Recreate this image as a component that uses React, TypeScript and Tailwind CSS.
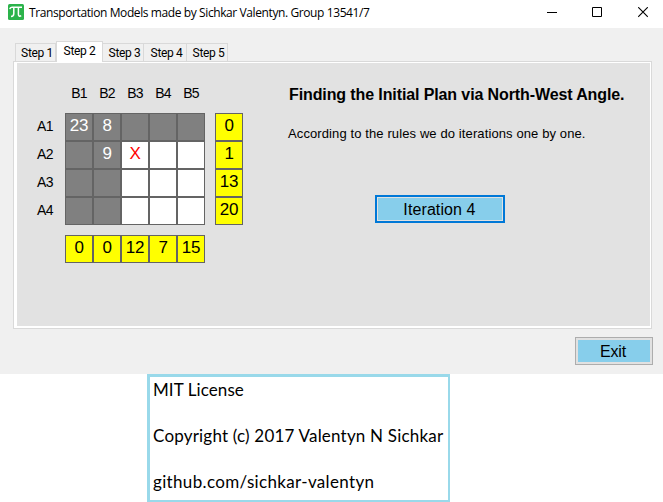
const COLUMNS = ['B1', 'B2', 'B3', 'B4', 'B5'];
const ROWS = [
  { name: 'A1', cells: ['23', '8', '', '', ''], closed: 5 },
  { name: 'A2', cells: ['', '9', 'X', '', ''], closed: 2 },
  { name: 'A3', cells: ['', '', '', '', ''], closed: 2 },
  { name: 'A4', cells: ['', '', '', '', ''], closed: 2 },
];
const SUPPLY = ['0', '1', '13', '20'];
const DEMAND = ['0', '0', '12', '7', '15'];

function Cell({ value, tone }: { value: string; tone: string }) {
  return (
    <div className={`h-7 w-7 border border-[#646464] pt-px text-center text-[17px] leading-[22px] tracking-[-0.3px] ${tone}`}>
      {value}
    </div>
  );
}

function TitleBar() {
  return (
    <header className="flex h-7 items-start bg-white">
      <svg className="mt-1 ml-2 h-4 w-4 shrink-0" viewBox="0 0 16 16">
        <rect width="16" height="16" rx="1.5" fill="#2bb34b" />
        <path
          d="M1.8 5.2C2 3.7 2.8 3.3 4 3.3H14M5.8 3.5V9.5C5.8 11.5 5 12.5 3 12.5M10.4 3.5V10.2C10.4 12 11.6 12.7 13.2 11.7"
          fill="none"
          stroke="white"
          strokeWidth="1.5"
        />
      </svg>
      <h1 className="ml-[5px] font-['Open_Sans',sans-serif] text-[12px] leading-[26px] tracking-[-0.4px] whitespace-nowrap">
        Transportation Models made by Sichkar Valentyn. Group 13541/7
      </h1>
      <div className="ml-auto flex pt-[7px] pr-[15px]">
        <svg className="mr-[35px] h-[11px] w-[10px]" viewBox="0 0 10 11">
          <path d="M0 5.5H10" stroke="black" />
        </svg>
        <svg className="mr-[36px] h-[11px] w-[10px]" viewBox="0 0 10 11">
          <path d="M.5 .5H9.5V9.5H.5Z" fill="none" stroke="black" />
        </svg>
        <svg className="h-[11px] w-[10px]" viewBox="0 0 10 11">
          <path d="M.2 .2L9.8 9.8M9.8 .2L.2 9.8" stroke="black" strokeWidth="1.1" />
        </svg>
      </div>
    </header>
  );
}

function Tabs() {
  const side = 'h-[18px] border-t border-r border-[#d9d9d9] bg-[#f0f0f0] pl-[3px] leading-[19px]';
  return (
    <nav className="flex h-[33px] items-end pl-[15px] text-center font-[Roboto,sans-serif] text-[12px] tracking-[-0.35px] whitespace-nowrap">
      <div className={`${side} w-[41px] border-l`}>Step 1</div>
      <div className="z-10 -mb-px h-[21px] w-[47px] border-x border-t border-[#d9d9d9] bg-white leading-[18px]">Step 2</div>
      <div className={`${side} w-[41px]`}>Step 3</div>
      <div className={`${side} w-[43px]`}>Step 4</div>
      <div className={`${side} w-[41px]`}>Step 5</div>
    </nav>
  );
}

export default function App() {
  return (
    <main className="h-[502px] w-[663px] overflow-hidden bg-white font-['Liberation_Sans',Arial,sans-serif] text-black">
      <TitleBar />
      <section className="h-[346px] bg-[#f0f0f0]">
        <Tabs />
        <div className="ml-[13px] h-[268px] w-[639px] border border-[#d9d9d9] bg-white pt-px pr-px pb-[2px] pl-[3px]">
          <div className="flex h-full bg-[#e2e2e2]">
            <div className="w-[226px] shrink-0 pt-[22px] pl-5">
              <div className="ml-7 flex h-7 text-center text-[14px] leading-[17px] tracking-[-0.7px]">
                {COLUMNS.map((name) => (
                  <div key={name} className="w-7">{name}</div>
                ))}
              </div>
              <div className="flex">
                <div className="w-7 text-[14px] leading-[27px] tracking-[-0.7px]">
                  {ROWS.map((row) => (
                    <div key={row.name} className="h-7">{row.name}</div>
                  ))}
                </div>
                <div>
                  {ROWS.map((row) => (
                    <div key={row.name} className="flex">
                      {row.cells.map((value, i) => (
                        <Cell
                          key={i}
                          value={value}
                          tone={i < row.closed ? 'bg-[#808080] text-white' : 'bg-white text-[#ff0000]'}
                        />
                      ))}
                    </div>
                  ))}
                </div>
                <div className="ml-[10px]">
                  {SUPPLY.map((value, i) => (
                    <Cell key={i} value={value} tone="bg-[#ffff00]" />
                  ))}
                </div>
              </div>
              <div className="mt-[10px] ml-7 flex">
                {DEMAND.map((value, i) => (
                  <Cell key={i} value={value} tone="bg-[#ffff00]" />
                ))}
              </div>
            </div>
            <div className="pt-[22px] pl-[45px] whitespace-nowrap">
              <h2 className="ml-px text-[16px] leading-5 font-bold tracking-[-0.11px]">Finding the Initial Plan via North-West Angle.</h2>
              <p className="mt-5 text-[13px] leading-[18px] tracking-[0.11px]">According to the rules we do iterations one by one.</p>
              <button className="mt-[52px] ml-[87px] block h-7 w-[130px] border-2 border-[#0078d7] bg-[#e1e1e1] p-px text-[16px] tracking-[0.1px]">
                <span className="block h-[22px] bg-[#87ceeb] pr-px leading-[23px]">Iteration 4</span>
              </button>
            </div>
          </div>
        </div>
        <button className="mt-2 ml-[575px] block h-7 w-[78px] border border-[#adadad] bg-[#e1e1e1] p-[2px] text-[16px] tracking-[-0.2px]">
          <span className="block h-[22px] bg-[#87ceeb] pr-[2px] leading-[23px]">Exit</span>
        </button>
      </section>
      <footer className="ml-[147px] h-[128px] w-[303px] border-t-[3px] border-r-2 border-b-2 border-l-[3px] border-[#99d9ea] bg-white pl-[3px] font-['Lato',sans-serif] text-[17px] leading-[23px] whitespace-nowrap">
        <p className="pt-px tracking-[0.08px]">MIT License</p>
        <p className="pt-[23px] tracking-[0.2px]">Copyright (c) 2017 Valentyn N Sichkar</p>
        <p className="pt-[23px] tracking-[0.34px]">github.com/sichkar-valentyn</p>
      </footer>
    </main>
  );
}
